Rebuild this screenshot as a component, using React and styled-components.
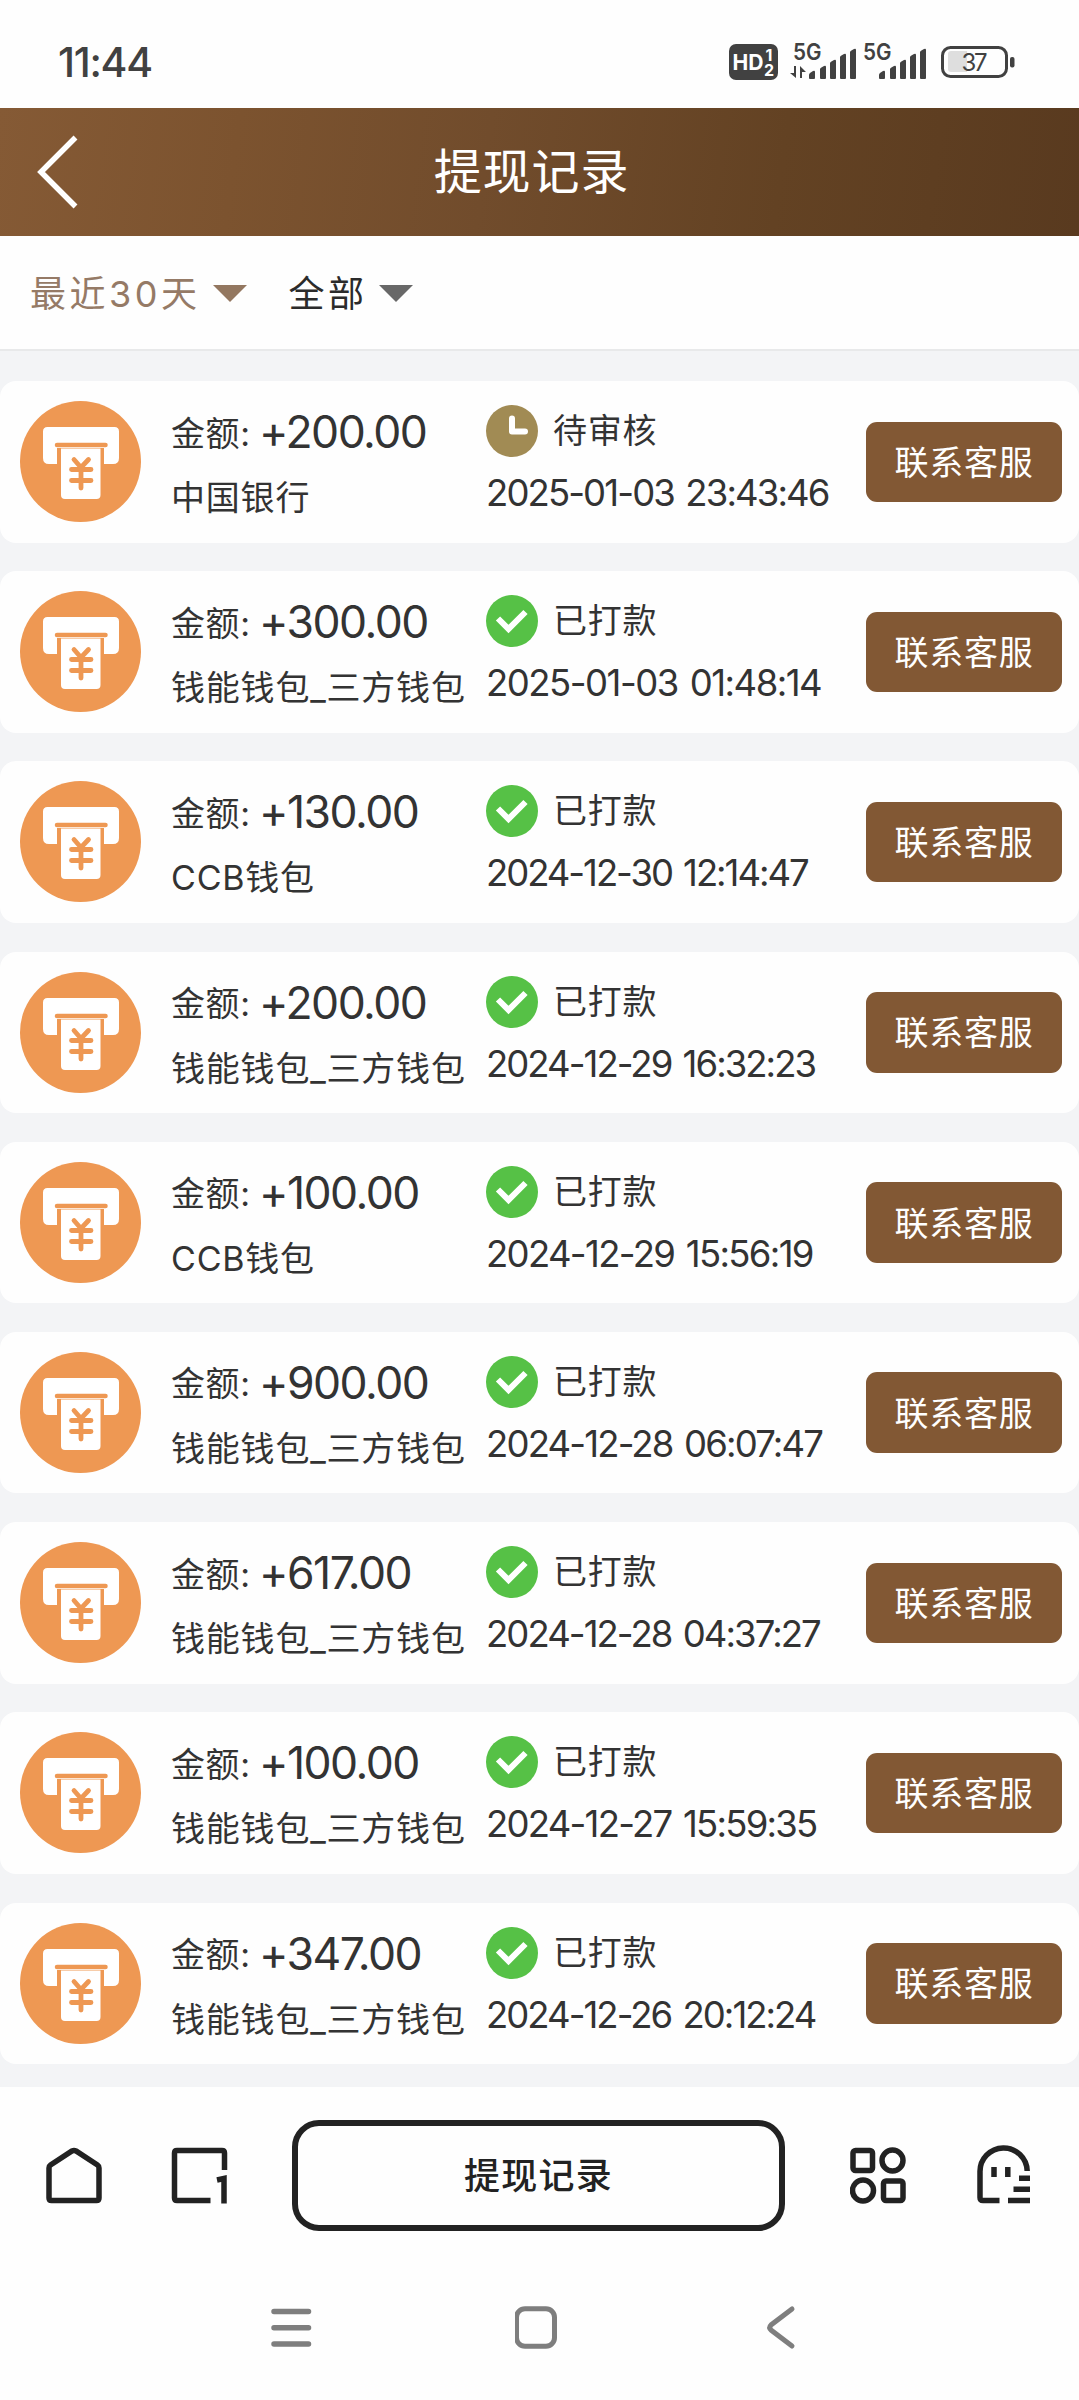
import React from "react";
import styled, { createGlobalStyle } from "styled-components";

const GlobalStyle = createGlobalStyle`
  * { box-sizing: border-box; }
  body {
    margin: 0;
    background: #fefefe;
    font-family: Inter, "Noto Sans CJK SC", sans-serif;
    color: #333;
  }
  svg { display: block; flex: none; }
`;

const Screen = styled.div`
  width: 1079px;
  height: 2400px;
  display: flex;
  flex-direction: column;
  overflow: hidden;
  background: #fefefe;
`;

const StatusBar = styled.div`
  height: 108px;
  flex: none;
  display: flex;
  justify-content: space-between;
  align-items: flex-start;
  padding: 32px 64px 0 58px;
`;

const Clock = styled.div`
  height: 60px;
  line-height: 60px;
  font-size: 41px;
  font-weight: 500;
  letter-spacing: -1.3px;
  color: #414141;
`;

const Indicators = styled.div`
  display: flex;
`;

const Header = styled.header`
  height: 128px;
  flex: none;
  display: flex;
  align-items: center;
  padding: 0 36px;
  background: linear-gradient(98deg, #855a35 0%, #7c532f 22%, #714c2c 45%, #634223 72%, #593a1f 100%);
`;

const Title = styled.h1`
  flex: 1;
  margin: 0 58px 0 0;
  text-align: center;
  font-size: 48px;
  font-weight: 400;
  letter-spacing: 0.9px;
  line-height: 128px;
  color: #fff;
`;

const Filters = styled.div`
  height: 115px;
  flex: none;
  display: flex;
  align-items: center;
  gap: 41px;
  padding: 2px 30px 0;
  border-bottom: 2px solid #e8e9ea;
`;

const Filter = styled.div`
  display: flex;
  align-items: center;
  gap: ${(p) => (p.$active ? 13 : 11)}px;
  font-size: 36px;
  letter-spacing: ${(p) => (p.$active ? 3.5 : 3.6)}px;
  line-height: 60px;
  color: ${(p) => (p.$active ? "#957a66" : "#2b2b2b")};
`;

const Caret = styled.span`
  border: 17px solid transparent;
  border-bottom-width: 0;
  border-top-color: ${(p) => (p.$active ? "#937760" : "#686868")};
`;

const List = styled.main`
  height: 1736px;
  flex: none;
  display: flex;
  flex-direction: column;
  gap: 28.7px;
  padding-top: 30px;
  background: #f3f4f6;
`;

const Card = styled.article`
  height: 161.5px;
  flex: none;
  display: flex;
  align-items: flex-start;
  padding: 0 17px 0 20px;
  border-radius: 16px;
  background: #fefefe;
`;

const WithdrawIcon = styled.svg`
  margin: 20px 30px 0 0;
`;

const Payment = styled.div`
  width: 315px;
  padding-top: 21px;
  white-space: nowrap;
`;

const AmountLine = styled.div`
  height: 60px;
  display: flex;
  align-items: center;
`;

const Label = styled.span`
  width: 88px;
  font-size: 34px;
  letter-spacing: 0.6px;
  line-height: 60px;
  padding-top: 3px;
`;

const Amount = styled.span`
  font-size: 44.5px;
  line-height: 60px;
  letter-spacing: -1.5px;
`;

const Bank = styled.div`
  height: 60px;
  margin-top: 6px;
  font-size: 34px;
  letter-spacing: 0.8px;
  line-height: 60px;
`;

const Progress = styled.div`
  width: 380px;
  padding-top: 24px;
  white-space: nowrap;
`;

const State = styled.div`
  height: 52px;
  display: flex;
  align-items: center;
  gap: 15px;
  font-size: 34px;
  letter-spacing: 0.8px;
  line-height: 52px;
`;

const Time = styled.time`
  display: block;
  height: 60px;
  margin-top: 6px;
  font-size: 36.5px;
  line-height: 60px;
  word-spacing: 3px;
  letter-spacing: ${(p) => p.$tracking}px;
`;

const ContactButton = styled.button`
  width: 196px;
  height: 80.5px;
  margin: 40.5px 0 0;
  padding: 0 0 3px;
  border: 0;
  border-radius: 11px;
  background: #825834;
  color: #fff;
  font: inherit;
  font-size: 34px;
  letter-spacing: 0.8px;
`;

const Toolbar = styled.nav`
  height: 175px;
  flex: none;
  display: flex;
  align-items: flex-start;
  padding: 32.5px 46px 0;
`;

const ToolIcon = styled.svg`
  margin: 25px ${(p) => p.$after}px 0 0;
`;

const AddressBox = styled.div`
  width: 493px;
  height: 111px;
  flex: none;
  margin-right: 65px;
  border: 6px solid #222;
  border-radius: 27px;
  text-align: center;
  font-size: 36px;
  font-weight: 500;
  letter-spacing: 1.3px;
  line-height: 101px;
  color: #222;
`;

const SystemNav = styled.nav`
  display: flex;
  gap: 202px;
  padding: 42px 0 0 269px;
`;

function Signal({ data }) {
  return (
    <svg width="70" height="60" viewBox="0 -10 70 60" fill="#414141">
      <text x="4" y="17.5" fontFamily="Inter" fontWeight="600" fontSize="22.5" textLength="28.5" lengthAdjust="spacingAndGlyphs">5G</text>
      {data && (
        <path d="M7 24v12L1 31h4v-7zM11 36V24l6 6h-4v6z" />
      )}
      <path d="M20 36v-3q0-1 1-2l3-2q2-1 2 1v6q0 1-1 1h-4q-1 0-1-1z" />
      <path d="M31 36v-9q0-1 4-3q2-1 2 1v11q0 1-1 1h-4q-1 0-1-1z" />
      <path d="M41 36v-15q0-1 4-3q2-1 2 1v17q0 1-1 1h-4q-1 0-1-1z" />
      <path d="M51 36v-21q0-1 4-3q2-1 2 1v23q0 1-1 1h-4q-1 0-1-1z" />
      <path d="M61 36v-26q0-1 4-3q2-1 2 1v28q0 1-1 1h-4q-1 0-1-1z" />
    </svg>
  );
}

function CashOut() {
  return (
    <WithdrawIcon width="121" height="121" viewBox="0 0 121 121">
      <circle cx="60.5" cy="60.5" r="60.5" fill="#ee9853" />
      <path d="M27.5 26H94.500Q99 26 99 30.500V57Q99 63 93 63H84V47H37V63H29Q23 63 23 57V30.500Q23 26 27.500 26Z" fill="#fff" />
      <path d="M37 44H85.500" stroke="#ee9853" strokeWidth="4.500" strokeLinecap="round" />
      <path d="M41 47.500H80.500V94Q80.500 98 76.500 98H45Q41 98 41 94Z" fill="#fff" />
      <path d="M54 58.500L61 66.500L68.500 58.500M61 67V87M51.500 68.500H71M51.500 79.500H71" fill="none" stroke="#ee9853" strokeWidth="4.800" strokeLinecap="round" />
    </WithdrawIcon>
  );
}

function StateIcon({ pending }) {
  return (
    <svg width="52" height="52" viewBox="0 0 52 52" fill="none" stroke="#fff">
      <circle cx="26" cy="26" r="26" stroke="none" fill={pending ? "#a18b54" : "#56c146"} />
      {pending ? (
        <path d="M26 13.500V26.500H39" strokeWidth="6" strokeLinecap="round" strokeLinejoin="round" />
      ) : (
        <path d="M12 23.500L22.500 34L39.500 17" strokeWidth="6" />
      )}
    </svg>
  );
}

const wallet = "钱能钱包_三方钱包";

const records = [
  { amount: "+200.00", bank: "中国银行", time: "2025-01-03 23:43:46", tracking: -1.88, pending: true },
  { amount: "+300.00", bank: wallet, time: "2025-01-03 01:48:14", tracking: -1.49 },
  { amount: "+130.00", bank: "CCB钱包", time: "2024-12-30 12:14:47", tracking: -2.05 },
  { amount: "+200.00", bank: wallet, time: "2024-12-29 16:32:23", tracking: -1.96 },
  { amount: "+100.00", bank: "CCB钱包", time: "2024-12-29 15:56:19", tracking: -1.67 },
  { amount: "+900.00", bank: wallet, time: "2024-12-28 06:07:47", tracking: -1.83 },
  { amount: "+617.00", bank: wallet, time: "2024-12-28 04:37:27", tracking: -1.94 },
  { amount: "+100.00", bank: wallet, time: "2024-12-27 15:59:35", tracking: -1.75 },
  { amount: "+347.00", bank: wallet, time: "2024-12-26 20:12:24", tracking: -1.97 },
];

export default function App() {
  return (
    <Screen>
      <GlobalStyle />
      <StatusBar>
        <Clock>11:44</Clock>
        <Indicators>
          <svg width="60" height="60" viewBox="0 -10 60 60" fill="#fff" fontFamily="Inter" fontWeight="700">
            <rect x="0" y="2" width="49" height="36" rx="7" fill="#414141" />
            <text x="3.500" y="28" fontSize="21.500" textLength="31" lengthAdjust="spacingAndGlyphs">HD</text>
            <text x="36.500" y="18.500" fontSize="16">1</text>
            <text x="35" y="34" fontSize="16">2</text>
          </svg>
          <Signal data />
          <Signal />
          <svg width="86" height="60" viewBox="0 -10 86 60">
            <rect x="13.500" y="5.500" width="64" height="29" rx="8" fill="none" stroke="#414141" strokeWidth="3" />
            <path d="M22 9h16v21H22q-3 0-3-3V12q0-3 3-3z" fill="#dedede" />
            <rect x="81" y="15" width="4.500" height="10.500" rx="2" fill="#414141" />
            <text x="32.500" y="28.500" fontFamily="Inter" fontSize="24" textLength="26" fill="#414141">37</text>
          </svg>
        </Indicators>
      </StatusBar>

      <Header>
        <svg width="42" height="74" viewBox="0 0 42 74" fill="none" stroke="#fff" strokeWidth="5.5">
          <path d="M39.500 2.500L5 37L39.500 71.500" />
        </svg>
        <Title>提现记录</Title>
      </Header>

      <Filters>
        <Filter $active>最近30天<Caret $active /></Filter>
        <Filter>全部<Caret /></Filter>
      </Filters>

      <List>
        {records.map((r) => (
          <Card key={r.time}>
            <CashOut />
            <Payment>
              <AmountLine>
                <Label>金额:</Label>
                <Amount>{r.amount}</Amount>
              </AmountLine>
              <Bank>{r.bank}</Bank>
            </Payment>
            <Progress>
              <State>
                <StateIcon pending={r.pending} />
                {r.pending ? "待审核" : "已打款"}
              </State>
              <Time $tracking={r.tracking}>{r.time}</Time>
            </Progress>
            <ContactButton>联系客服</ContactButton>
          </Card>
        ))}
      </List>

      <Toolbar>
        <ToolIcon $after={69} width="56" height="60" viewBox="0 0 56 60" fill="none" stroke="#222" strokeWidth="5.500">
          <path d="M3 23Q3 21 4.500 20L26 6Q28 5 30 6L51.500 20Q53 21 53 23V53Q53 55.500 50.500 55.500H5.500Q3 55.500 3 53Z" />
        </ToolIcon>
        <ToolIcon $after={64} width="57" height="60" viewBox="0 0 57 60" fill="none" stroke="#222" strokeWidth="5.500">
          <path d="M53.500 25V8Q53.500 5.500 51 5.500H6Q3.500 5.500 3.500 8V53Q3.500 55.500 6 55.500H39.500M46 35L53 33.500V58.500" />
        </ToolIcon>
        <AddressBox>提现记录</AddressBox>
        <ToolIcon $after={71} width="56" height="60" viewBox="0 0 56 60" fill="none" stroke="#222" strokeWidth="5.500">
          <rect x="3" y="5.500" width="19.500" height="20" rx="2.500" />
          <circle cx="42.500" cy="15.500" r="10.500" />
          <circle cx="13" cy="45.500" r="10.500" />
          <rect x="33.500" y="36" width="19.500" height="19.500" rx="2.500" />
        </ToolIcon>
        <ToolIcon $after={0} width="54" height="60" viewBox="0 0 54 60" fill="none" stroke="#222" strokeWidth="5.500">
          <path d="M22.500 55.500H6Q3 55.500 3 52.500V27A23.600 23.600 0 0 1 50.200 26M53 33.200H42M53 44.300H36.500M53 55.500H31M17 22V32M30.800 22V32" />
        </ToolIcon>
      </Toolbar>

      <SystemNav>
        <svg width="44" height="48" viewBox="0 0 44 48" stroke="#7e7e7e" strokeWidth="5.500" strokeLinecap="round">
          <path d="M5 7.500H39.500M5 23.700H39.500M5 39.900H39.500" />
        </svg>
        <svg width="44" height="48" viewBox="0 0 44 48" fill="none" stroke="#7e7e7e" strokeWidth="5">
          <rect x="1.500" y="4.700" width="38" height="37.500" rx="8.500" />
        </svg>
        <svg width="44" height="48" viewBox="0 0 44 48" fill="none" stroke="#7e7e7e" strokeWidth="5" strokeLinecap="round">
          <path d="M31 5L10 21Q7.500 23.500 10 26L31 42" />
        </svg>
      </SystemNav>
    </Screen>
  );
}
